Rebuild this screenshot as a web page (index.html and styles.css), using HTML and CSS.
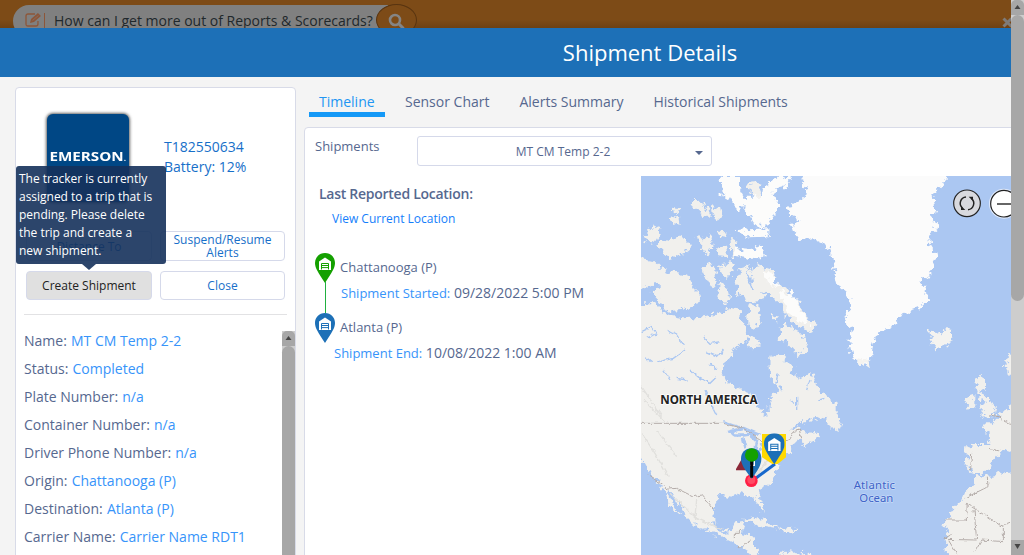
FILE: index.html
```html
<!DOCTYPE html>
<html lang="en">
<head>
<meta charset="utf-8">
<title>Shipment Details</title>
<link rel="stylesheet" href="styles.css">
</head>
<body>
<svg class="defs" width="0" height="0">
  <symbol id="pin" viewBox="0 0 20 30"><path d="M10 0C4 0 0 4.500 0 10c0 5 3 9 10 20 7-11 10-15 10-20C20 4.500 16 0 10 0z" fill="currentColor"/><path d="M4 17V8.500L10 4.500l6 4V17z" fill="#fff"/><path d="M6.500 16.500v-6h7v6M6.500 12.500h7M6.500 14.600h7" fill="none" stroke="currentColor"/></symbol>
</svg>
<div class="page">
  <div class="view">
    <div class="topbar">
      <div class="search">
        <svg class="edit" width="17" height="15" viewBox="0 0 17 15"><path d="M13 9v3q0 2-2 2H3q-2 0-2-2V4q0-2 2-2h7" fill="none" stroke="currentColor" stroke-width="1.300"/><path d="M6 7l7-6 3 3-7 6-4 1z" fill="currentColor"/><path d="M7.500 8.500l6-5" stroke="#807670" stroke-width=".7"/></svg>
        <i class="rule"></i>
        <span class="query">How can I get more out of Reports &amp; Scorecards?</span>
        <span class="go"><svg width="17" height="17" viewBox="0 0 17 17" fill="none" stroke="#858585"><circle cx="7" cy="7" r="5" stroke-width="2.600"/><path d="M10.500 10.500l5 5" stroke-width="3"/></svg></span>
      </div>
      <svg class="x" width="11" height="11" viewBox="0 0 11 11"><path d="M1.500 1.500l8 8m0-8l-8 8" stroke="#7f7b78" stroke-width="3"/></svg>
    </div>
    <header class="header">Shipment Details</header>
    <main class="body">
      <aside class="card">
        <div class="device">
          <div class="tracker"><span>EMERSON<small>.</small></span></div>
          <div class="info">T182550634<br>Battery: 12%</div>
        </div>
        <div class="actions">
          <button class="btn">Distance To</button>
          <button class="btn">Suspend/Resume Alerts</button>
          <button class="btn on">Create Shipment</button>
          <button class="btn">Close</button>
          <div class="tooltip">The tracker is currently assigned to a trip that is pending. Please delete the trip and create a new shipment.</div>
        </div>
        <div class="details">
          <div class="rows">
            <p>Name: <a>MT CM Temp 2-2</a></p>
            <p>Status: <a>Completed</a></p>
            <p>Plate Number: <a>n/a</a></p>
            <p>Container Number: <a>n/a</a></p>
            <p>Driver Phone Number: <a>n/a</a></p>
            <p>Origin: <a>Chattanooga (P)</a></p>
            <p>Destination: <a>Atlanta (P)</a></p>
            <p>Carrier Name: <a>Carrier Name RDT1</a></p>
          </div>
          <div class="bar small"><svg class="arrow" width="13" height="15"><path d="M3.500 9l3-4 3 4z" fill="#444"/></svg><div class="thumb"></div></div>
        </div>
      </aside>
      <section class="content">
        <nav class="tabs"><span class="tab active">Timeline</span><span class="tab">Sensor Chart</span><span class="tab">Alerts Summary</span><span class="tab">Historical Shipments</span></nav>
        <div class="panel">
          <div class="filter"><label>Shipments</label><div class="select"><span>MT CM Temp 2-2</span><i></i></div></div>
          <div class="split">
            <div class="timeline">
              <h3>Last Reported Location:</h3>
              <a class="current">View Current Location</a>
              <div class="stop green"><svg class="pin" width="20" height="30"><use href="#pin"/></svg><div><div class="place">Chattanooga (P)</div><div class="event"><span>Shipment Started:</span> 09/28/2022 5:00 PM</div></div></div>
              <div class="stop blue"><svg class="pin" width="20" height="30"><use href="#pin"/></svg><div><div class="place">Atlanta (P)</div><div class="event end"><span>Shipment End:</span> 10/08/2022 1:00 AM</div></div></div>
            </div>
            <svg class="map" width="370" height="379" viewBox="3 18 1110 1137">
              <defs>
                <filter id="coast" filterUnits="userSpaceOnUse" x="-20" y="0" width="1160" height="1180"><feTurbulence type="fractalNoise" baseFrequency=".06" numOctaves="3" seed="4"/><feDisplacementMap in="SourceGraphic" scale="32" xChannelSelector="R" yChannelSelector="G"/></filter>
                <filter id="fine" filterUnits="userSpaceOnUse" x="-20" y="0" width="1160" height="1180"><feTurbulence type="fractalNoise" baseFrequency=".07" numOctaves="2" seed="8"/><feDisplacementMap in="SourceGraphic" scale="14" xChannelSelector="R" yChannelSelector="G"/></filter>
              </defs>
              <path d="M3 18h1110v1137H3z" fill="#abc7f2"/>
              <g filter="url(#coast)" fill="#f1f0ed">
                <!-- mainland -->
                <path d="M-20 400L40 400 75 435 130 445 180 440 215 435 240 425 260 430 270 410 300 418 302 450 327 490 312 520 282 535 275 560 250 580 245 610 257 632 290 655 330 670 345 700 378 738 387 725 385 690 415 660 402 640 390 610 388 560 430 557 460 590 455 610 480 625 510 610 525 635 548 672 577 690 588 708 560 735 530 750 480 755 450 780 482 775 500 790 530 785 540 797 510 820 490 832 485 805 455 825 452 850 418 868 407 905 408 920 385 945 360 960 355 975 372 1010 370 1028 350 1002 340 977 300 970 270 980 240 975 222 1010 220 1050 235 1080 265 1085 280 1060 312 1055 305 1090 345 1100 345 1140 375 1175 340 1175 318 1140 290 1122 250 1102 210 1087 170 1070 140 1040 115 1000 88 957 80 965 120 1032 105 1028 80 985 60 940 35 915 15 880 -20 830z"/>
                <!-- arctic islands -->
                <path d="M-20 262L40 270 72 300 70 312 35 345-20 365zM50 305L100 305 145 315 160 345 180 385 160 410 120 420 85 425 60 395 35 370 60 350 40 330zM10 205L40 165 65 180 45 215 20 220zM60 205L90 210 120 195 155 230 130 250 90 265 70 245 52 225zM95 110L125 115 115 130 92 125zM88 145L115 140 118 160 98 165zM160 85L190 100 210 130 205 145 175 130 155 100zM215 108L240 115 245 140 230 155 218 130zM170 200L195 205 210 190 220 240 200 250 175 220zM235 232L255 230 258 258 235 255zM230 180L262 185 262 200 240 198zM185 310L205 280 225 290 230 340 218 355 200 325zM242 282L285 280 275 315 250 318 240 305zM240 340L258 345 270 390 255 405 232 380z"/>
                <path d="M300 295L330 285 325 330 335 360 375 375 365 390 330 395 295 370 290 330zM330 300L350 285 400 300 410 340 440 360 470 390 500 440 530 465 515 490 480 470 440 440 420 400 385 370 340 365zM330 400L355 405 360 450 345 475 325 465 325 430zM430 460L470 480 505 520 498 545 475 555 440 520 415 505zM320 495L350 505 362 530 325 532zM395 435L415 440 405 455zM320 40L350 35 360 60 355 90 335 75zM270 200L295 215 290 235 330 245 325 265 275 260z"/>
                <!-- newfoundland, antilles -->
                <path d="M555 750L570 700 590 705 590 740 605 760 600 780 580 775zM308 1050L345 1040 385 1055 420 1080 370 1070zM420 1075L460 1070 475 1085 430 1090zM410 1155L440 1145 510 1155 530 1170 400 1170z"/>
                <!-- europe and africa -->
                <path d="M1140 565L1105 555 1098 575 1108 620 1140 620zM1005 630L1020 620 1035 625 1035 655 1020 665 1040 680 1055 700 1068 720 1065 735 1025 740 1038 725 1020 715 1038 700 1015 680 1008 650zM985 675L1003 672 1003 710 975 725 978 700zM1130 700L1108 712 1075 735 1060 760 1035 760 1022 770 1045 780 1048 825 1000 825 978 830 982 870 978 898 1020 912 1050 895 1060 865 1085 845 1130 830zM1008 915L1050 920 1130 898V1175H945L920 1145 918 1115 930 1095 910 1065 915 1055 935 1025 960 1000 975 965 1000 945z"/>
              </g>
              <g filter="url(#coast)">
                <path d="M485 40L500 5 930 5 915 35 880 75 885 110 875 150 895 175 868 200 870 225 892 260 875 295 867 320 840 330 850 350 865 390 840 410 785 432 772 455 712 492 700 520 695 555 675 590 637 560 628 520 635 480 610 440 632 420 625 370 590 340 580 270 560 225 520 205 480 210 450 165 485 155 440 130 445 110 495 80 500 55z" fill="#fbfbfb"/>
                <path d="M242 18L300 18 300 60 320 100 300 120 270 90 245 75zM320 80L360 80 390 30 455 15 440 50 400 60 415 105 400 135 380 170 345 165 315 120zM285 180L385 175 385 200 320 202zM280 235L330 240 365 225 378 250 360 265 280 260zM370 300L400 315 415 345 390 350zM420 365L460 370 480 420 510 465 490 465 440 420z" fill="#fcfcfb"/>
                <path d="M868 510L880 500 862 490 865 480 890 490 930 478 940 500 925 525 890 538zM650 565L685 570 690 590 660 580z" fill="#f4f3f0"/>
              </g>
              <!-- inland water -->
              <g filter="url(#fine)" fill="none" stroke="#abc7f2" stroke-width="7">
                <path d="M5 485l30-15 15 20-30 15M80 480l30 15 20 30M55 575l45-10 35-25M190 500l20 20 30-5M200 545l35 15 15-20M210 580l20 20M110 625l30 5M150 600l30 25 30 15 20-20M195 660l15 35 20 40M70 600l20 30M15 560l20 15" stroke-width="4"/>
                <path d="M270 785L310 775 345 790 310 795 285 795zM310 805L318 835M332 795L350 810 345 835M340 850L365 835M360 825L385 820" stroke-width="10"/>
                <path d="M415 610l-10 40M470 680v40M450 690l15 10M500 660l10-30M420 650l8 15M538 690l15-5M250 755l30 10 20 5" stroke-width="4"/>
              </g>
              <g fill="none" stroke="#b4aca9" stroke-width="3" filter="url(#fine)">
                <path d="M3 760H250L310 775 355 805 385 825 445 810 460 785 478 780 485 805M25 915L85 957 110 955 160 980 185 975 220 1015M280 1105v-15h18v-10M335 1110l-40 25"/>
                <path d="M1048 835l30 8M995 845l-3 55M1050 735l25 5 20 15 18 5M1042 920l2 30-70 35M982 1000l-3 50h-65M979 1000l108 70 26-10M1002 1020l8 90-100-2 25-15M1090 1075v40l-65-5-20 35M925 1110l25 40"/>
              </g>
              <g fill="none" stroke="#e1e0dd" stroke-width="4" filter="url(#fine)"><path d="M5 650l60 90M10 690l70 70M5 790l40 60 40 70M50 780l60 80M90 970l80 75 80 35M170 990l-5 50M400 850l-60 70M330 940l50-60"/></g>
              <path d="M340 930L405 882" stroke="#1768cc" stroke-width="9"/>
              <path d="M366 792h72v70l-25 20h-16l-31-20z" fill="#ffd900"/>
              <use href="#pin" x="372" y="790" width="62" height="93" color="#1d70b7"/>
              <path d="M309 860L288 897v4h32z" fill="#8b2737"/>
              <circle cx="334" cy="932" r="19" fill="#ff1f45"/><circle cx="334" cy="930" r="12" fill="#ff4a63"/>
              <path d="M335 835c-20 0-32 14-32 31 0 16 10 31 32 60 22-29 29-44 29-60 0-17-9-31-29-31z" fill="#1d70b7"/>
              <path d="M343 873v14M330 886h15" stroke="#fff" stroke-width="4"/>
              <path d="M335 865v58" stroke="#050505" stroke-width="9"/>
              <circle cx="335" cy="855" r="20" fill="#14a000"/>
              <g class="region"><text x="61" y="702" textLength="292">NORTH AMERICA</text></g>
              <g class="ocean"><text x="641" y="957" textLength="124">Atlantic</text><text x="658" y="997" textLength="102">Ocean</text></g>
              <circle cx="981" cy="100" r="40" fill="#d8d9de" stroke="#222" stroke-width="3.500"/>
              <g fill="none" stroke="#222" stroke-width="4.500"><path d="M978 81A19 19 0 0 0 967 114M984 119A19 19 0 0 0 995 86"/></g>
              <path d="M963 107v13h13zM999 93V80h-13z" fill="#222"/>
              <circle cx="1092" cy="101" r="42" fill="#fff" stroke="#dfe9fb" stroke-width="6"/><circle cx="1092" cy="101" r="40" fill="#fff" stroke="#222" stroke-width="3.500"/>
              <path d="M1071 102h42" stroke="#333" stroke-width="4.500"/>
            </svg>
          </div>
        </div>
      </section>
    </main>
  </div>
  <div class="bar"><svg class="arrow" width="13" height="15"><path d="M3.500 9l3-4 3 4z" fill="#444"/></svg><div class="thumb"></div><svg class="arrow" width="13" height="15"><path d="M3.500 4l3 5 3-5z" fill="#444"/></svg></div>
</div>
</body>
</html>
```
FILE: styles.css
```css
* { box-sizing: border-box; }
body { margin: 0; font: 14px/20px "Open Sans", sans-serif; color: #56688f; }
p, h3 { margin: 0; }
svg { display: block; }
.defs { position: absolute; }
.page { display: flex; width: 1024px; height: 555px; overflow: hidden; }
.view { width: 1011px; height: 555px; overflow: hidden; background: #f4f4f4; }
.topbar { display: flex; justify-content: space-between; height: 28px; overflow: hidden; background: linear-gradient(#7d4b17 20px, #6d4114); }
.search { display: flex; align-items: flex-start; width: 404px; height: 32px; margin: 5px 0 0 13px; padding-left: 12px; border-radius: 16px; background: linear-gradient(90deg, #808080 375px, transparent 375px); }
.edit { color: #8d5639; margin-top: 7px; }
.rule { width: 1px; height: 16px; margin: 8px 0 0 2px; background: #8d5639; }
.query { width: 332px; height: 30px; line-height: 31px; padding-left: 9px; white-space: nowrap; color: #20282c; }
.go { flex: none; width: 41px; height: 32px; margin-top: -1px; padding: 8px 0 0 11px; border: 1px solid #583410; border-radius: 50%; background: #7d4b17; }
.x { margin: 17px -2px 0 0; }
.header { width: 1300px; height: 49px; background: #1d70b7; color: #fff; text-align: center; font-size: 22px; line-height: 49px; }
.body { display: flex; gap: 8px; width: 1300px; padding-left: 15px; }
.card { width: 281px; height: 500px; margin-top: 10px; padding: 0 0 0 8px; border: 1px solid #d8dbe8; border-radius: 4px; background: #fff; flex: none; }
.device { display: flex; height: 143px; padding: 26px 0 0 23px; gap: 35px; }
.tracker { display: flex; justify-content: center; width: 82px; height: 88px; border-radius: 6px; background: #004785; box-shadow: 0 0 3px 1px #666; color: #fff; font: bold 13px/84px "Open Sans", sans-serif; white-space: nowrap; }
.tracker span { transform: scaleX(1.17); }
.tracker small { font-size: 7px; }
.info { padding-top: 23px; color: #176fc9; }
.actions { position: relative; display: grid; grid-template-columns: 126px 125px; grid-template-rows: 30px 29px; gap: 10px 8px; width: 263px; height: 84px; padding-left: 2px; border-bottom: 1px solid #e2e2e4; }
.btn { border: 1px solid #d5d9ea; border-radius: 4px; background: #fff; color: #176fc9; font: 12px/13px "Open Sans", sans-serif; padding: 0 10px; }
.btn.on { background: #e0e0e0; color: #222; padding: 0; }
.tooltip { position: absolute; left: -8px; top: -65px; width: 150px; height: 98px; padding: 4px 10px 4px 3px; border-radius: 3px; background: rgba(21, 49, 91, .9); color: #fff; font-size: 12px; font-weight: 500; line-height: 18px; letter-spacing: -.02px; }
.tooltip::after { content: ""; position: absolute; left: 66px; top: 98px; border: 7px solid transparent; border-top: 6px solid #2c456b; border-bottom: 0; }
.details { display: flex; justify-content: space-between; padding-top: 12px; }
.rows { line-height: 28px; }
.rows a { color: #3794fa; margin-left: .5px; }
.bar { display: flex; flex-direction: column; width: 13px; height: 555px; background: #cdcdcd; flex: none; }
.bar .arrow { background: #a7a7a7; }
.bar > .arrow:first-child { border-radius: 5px 5px 0 0; }
.bar .thumb { height: 286px; border-radius: 7px; background: #a7a7a7; margin-bottom: 239px; flex: none; }
.bar .arrow { flex: none; }
.bar.small { height: 224px; margin-top: 4px; }
.content { width: 980px; }
.tabs { display: flex; gap: 10px; height: 40px; padding-left: 5px; }
.tab { padding: 15px 10px 0; }
.tab.active { width: 76px; color: #2196f3; border-bottom: 5px solid #1599f7; }
.panel { margin-top: 10px; height: 450px; border: 1px solid #d8dbe8; border-radius: 4px; background: #fff; }
.filter { display: flex; height: 48px; padding: 8px 0 0 10px; }
.filter label { width: 102px; font-size: 13px; }
.select { position: relative; width: 295px; height: 30px; padding-right: 3px; border: 1px solid #d5d9ea; border-radius: 3px; font-size: 12px; line-height: 30px; text-align: center; }
.select i { position: absolute; right: 8px; top: 14px; border: 4px solid transparent; border-top-color: #56688f; border-bottom: 0; }
.split { display: flex; }
.timeline { width: 336px; padding: 8px 0 0 10px; }
h3 { padding-left: 4px; font-size: 14px; font-weight: 600; line-height: 20px; letter-spacing: -.27px; }
.current { display: block; padding: 5px 0 0 17px; font-size: 12px; line-height: 20px; color: #147efb; }
.stop { display: flex; gap: 5px; height: 60px; position: relative; }
.stop.green { color: #14a000; margin-top: 24px; }
.stop.blue { color: #1d70b7; }
.stop.green::after { content: ""; position: absolute; left: 10px; top: 29px; width: 1px; height: 31px; background: #20b040; }
.place { font-size: 13px; color: #56688f; padding-top: 4px; height: 29px; white-space: nowrap; }
.event { color: #56688f; padding: 1px 0 0 1px; white-space: nowrap; }
.event span { font-size: 13px; color: #3794fa; }
.event.end { margin-left: -6px; padding-left: 0; }
.map { flex: none; }
.region text { font: bold 35px "Noto Sans", sans-serif; fill: #222; stroke: #fff; stroke-width: 4px; paint-order: stroke; }
.ocean text { font: 34px "Noto Sans", sans-serif; fill: #3c62c8; stroke: #c7daf7; stroke-width: 4px; paint-order: stroke; }
```
